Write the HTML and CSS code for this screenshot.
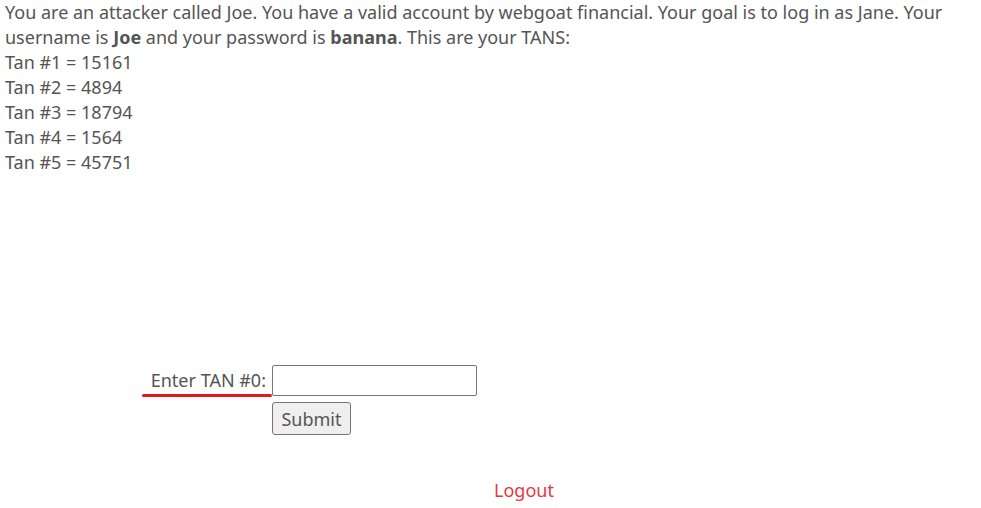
FILE: index.html
```html
<!DOCTYPE html>
<html>
<head>
<meta charset="utf-8">
<link rel="stylesheet" href="styles.css">
</head>
<body>
<div class="page">
  <p class="intro">You are an attacker called Joe. You have a valid account by webgoat financial. Your goal is to log in as Jane. Your<br>username is <b>Joe</b> and your password is <b>banana</b>. This are your TANS:</p>
  <ul class="tans">
    <li>Tan #1 = 15161</li>
    <li>Tan #2 = 4894</li>
    <li>Tan #3 = 18794</li>
    <li>Tan #4 = 1564</li>
    <li>Tan #5 = 45751</li>
  </ul>
  <form class="tan-form">
    <div class="row">
      <label class="label mark" for="tan">Enter TAN #0:</label>
      <input id="tan" class="field" type="text">
    </div>
    <div class="row">
      <span class="label"></span>
      <button type="button" class="submit">Submit</button>
    </div>
  </form>
  <div class="logout-wrap"><a class="logout" href="#">Logout</a></div>
</div>
</body>
</html>
```
FILE: styles.css
```css
html, body {
  margin: 0;
  padding: 0;
  background: #fff;
}
.page {
  padding: 0 5px;
  font-family: "Noto Sans", "Open Sans", sans-serif;
  font-size: 18px;
  line-height: 25px;
  color: #555;
}
.intro {
  margin: 0;
}
.intro b {
  font-weight: bold;
}
.tans {
  list-style: none;
  margin: 0;
  padding: 0;
}
.tan-form {
  margin-top: 190px;
  display: flex;
  flex-direction: column;
  gap: 6px;
}
.row {
  display: flex;
  align-items: center;
}
.label {
  width: 266px;
  text-align: right;
  padding-right: 5px;
  box-sizing: border-box;
}
.mark {
  position: relative;
}
.mark::after {
  content: "";
  position: absolute;
  left: 137px;
  right: -1px;
  bottom: -4px;
  height: 3px;
  border-radius: 2px;
  background: #e8151c;
}
.field {
  width: 205px;
  height: 31px;
  box-sizing: border-box;
  border: 1px solid #767676;
  border-radius: 2px;
  margin: 0 0 0 1px;
  padding: 0 4px;
  font-family: inherit;
  font-size: 16px;
}
.submit {
  width: 79px;
  height: 33px;
  box-sizing: border-box;
  border: 1px solid #767676;
  border-radius: 3px;
  background: #efefef;
  color: #555;
  font-family: inherit;
  font-size: 18px;
  padding: 0;
  margin-left: 1px;
}
.logout-wrap {
  margin-top: 43px;
  padding-left: 489px;
}
.logout {
  color: #e8383d;
  text-decoration: none;
}
```
